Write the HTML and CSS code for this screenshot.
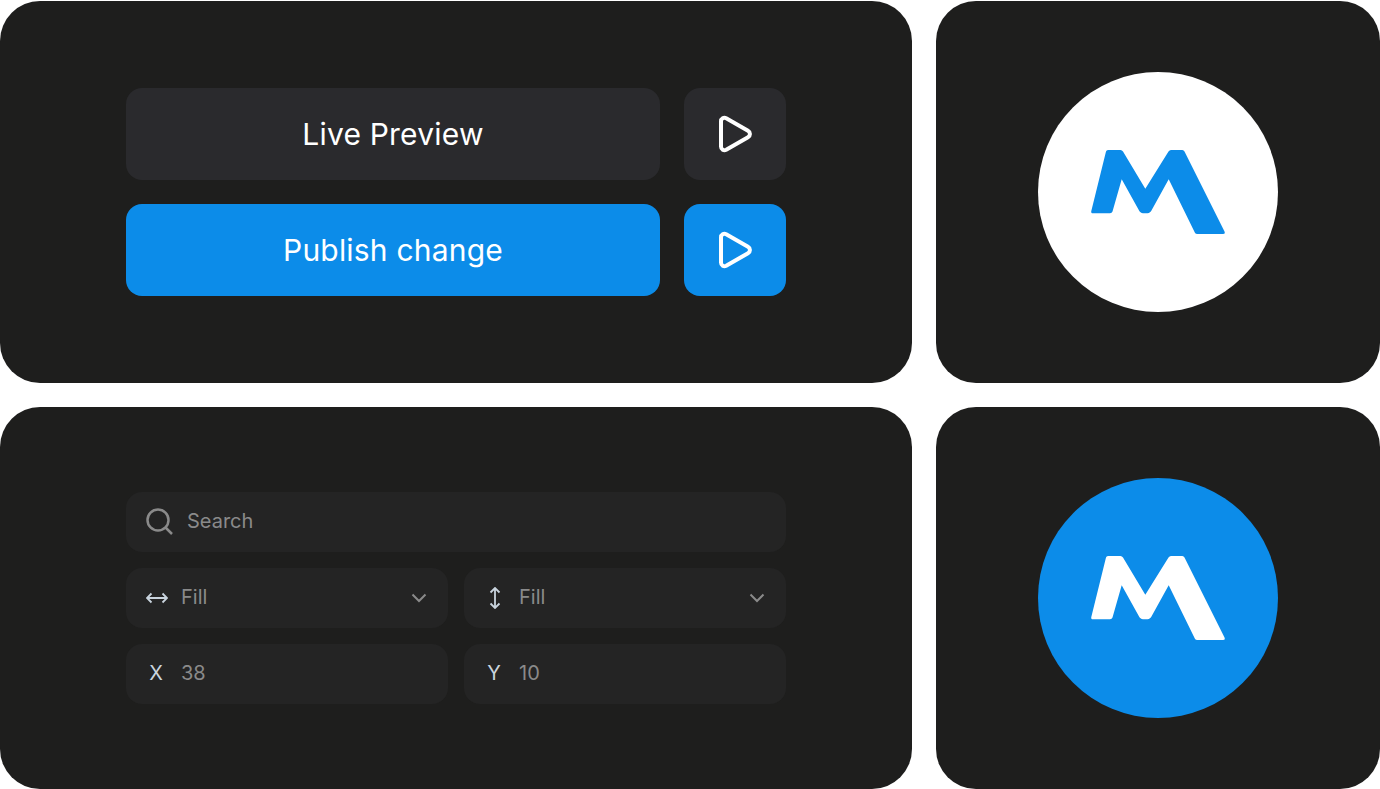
FILE: index.html
```html
<!DOCTYPE html>
<html lang="en">
<head>
<meta charset="utf-8">
<title>UI components</title>
<link rel="stylesheet" href="styles.css">
</head>
<body>
<svg class="defs" width="0" height="0" aria-hidden="true">
  <defs>
    <symbol id="logo" viewBox="0 0 136 86">
      <path d="M18 1H30.500Q32 1 33 2.500L55.300 39.700L78.500 2.500Q79.500 1 81 1H92.300Q93.800 1 94.500 2.500L134.500 82.500Q135.500 85 133 85H107.500Q105.500 85 104.800 83.500L78.700 30.300L62 60.500Q60.200 64.300 57.500 64.300H53Q50.300 64.300 48.500 60.500L31.700 30.300L22.500 62.500Q21.900 64.300 20 64.300H3Q.7 64.300 1.300 62L16 2.500Q16.400 1 18 1Z"/>
    </symbol>
    <symbol id="play" viewBox="0 0 36 38">
      <path d="M4 6.500C4 3.500 6.800 2 9.200 3.300L31 15.800C33.600 17.300 33.600 20.700 31 22.200L9.200 34.700C6.800 36 4 34.500 4 31.500Z"/>
    </symbol>
  </defs>
</svg>
<main class="board">
  <section class="card buttons">
    <div class="btn-row">
      <button class="btn btn-dark btn-wide">Live Preview</button>
      <button class="btn btn-dark btn-square" aria-label="Play"><svg class="play"><use href="#play"/></svg></button>
    </div>
    <div class="btn-row">
      <button class="btn btn-blue btn-wide">Publish change</button>
      <button class="btn btn-blue btn-square" aria-label="Play"><svg class="play"><use href="#play"/></svg></button>
    </div>
  </section>
  <section class="card logo-card">
    <div class="circle circle-white"><svg class="logo"><use href="#logo"/></svg></div>
  </section>
  <section class="card fields">
    <div class="field field-search">
      <svg class="search-icon" viewBox="0 0 28 28"><circle cx="12" cy="12" r="10.500"/><path d="M19.500 19.500L26 26"/></svg>
      <span class="value">Search</span>
    </div>
    <div class="field-grid">
      <div class="field">
        <svg class="axis-icon" viewBox="0 0 22 12"><path d="M1 6H21M5.500 1.500L1 6L5.500 10.500M16.500 1.500L21 6L16.500 10.500"/></svg>
        <span class="value">Fill</span>
        <svg class="chevron" viewBox="0 0 16 10"><path d="M1.500 1.500L8 8L14.500 1.500"/></svg>
      </div>
      <div class="field">
        <svg class="axis-icon" viewBox="0 0 22 22"><path d="M11 1V21M6.500 5.500L11 1L15.500 5.500M6.500 16.500L11 21L15.500 16.500"/></svg>
        <span class="value">Fill</span>
        <svg class="chevron" viewBox="0 0 16 10"><path d="M1.500 1.500L8 8L14.500 1.500"/></svg>
      </div>
      <div class="field"><span class="axis-label">X</span><span class="value">38</span></div>
      <div class="field"><span class="axis-label">Y</span><span class="value">10</span></div>
    </div>
  </section>
  <section class="card logo-card">
    <div class="circle circle-blue"><svg class="logo"><use href="#logo"/></svg></div>
  </section>
</main>
</body>
</html>
```
FILE: styles.css
```css
* { box-sizing: border-box; }
html, body { margin: 0; background: #fff; }
body { padding-top: 1px; font-family: Inter, "Liberation Sans", sans-serif; overflow: hidden; }
.defs { position: absolute; }
.board {
  display: grid;
  grid-template-columns: 912px 444px;
  grid-template-rows: 382px 382px;
  gap: 24px;
  width: 1380px;
}
.card { background: #1e1e1d; border-radius: 40px; }
.buttons {
  display: flex;
  flex-direction: column;
  gap: 24px;
  padding: 87px 126px;
}
.btn-row { display: flex; gap: 24px; }
.btn {
  height: 92px;
  border: 0;
  border-radius: 16px;
  padding: 0;
  color: #fff;
  font: 400 30px Inter, sans-serif;
  letter-spacing: 0.2px;
  display: flex;
  align-items: center;
  justify-content: center;
}
.btn-wide { flex: 1; }
.btn-square { width: 102px; }
.btn-dark { background: #2a2a2d; }
.btn-blue { background: #0c8ce9; }
.play { width: 36px; height: 38px; fill: none; stroke: #fff; stroke-width: 4; }
.logo-card { display: flex; align-items: center; justify-content: center; }
.circle {
  width: 240px;
  height: 240px;
  border-radius: 50%;
  display: flex;
  align-items: center;
  justify-content: center;
}
.circle-white { background: #fff; fill: #0c8ce9; }
.circle-blue { background: #0c8ce9; fill: #fff; }
.logo { width: 136px; height: 86px; }
.fields {
  display: flex;
  flex-direction: column;
  gap: 16px;
  padding: 85px 126px;
}
.field-grid { display: grid; grid-template-columns: 322px 322px; gap: 16px; }
.field {
  height: 60px;
  border-radius: 16px;
  background: #242424;
  display: flex;
  align-items: center;
  padding-left: 20px;
  padding-right: 20px;
}
.field-search { padding-left: 20px; gap: 13px; }
.value { font-size: 20px; color: #8a8a8a; margin-bottom: 2px; }
.search-icon { width: 28px; height: 28px; fill: none; stroke: #8a8a8a; stroke-width: 2.500; }
.axis-icon { width: 22px; height: 22px; margin-right: 13px; fill: none; stroke: #c9d4de; stroke-width: 1.800; }
.axis-label { width: 22px; margin-left: -1px; margin-right: 14px; margin-bottom: 2px; font-size: 20px; color: #c9d4de; text-align: center; }
.chevron { width: 16px; height: 10px; margin-left: auto; margin-right: 1px; fill: none; stroke: #8a8a8a; stroke-width: 2; }
```
